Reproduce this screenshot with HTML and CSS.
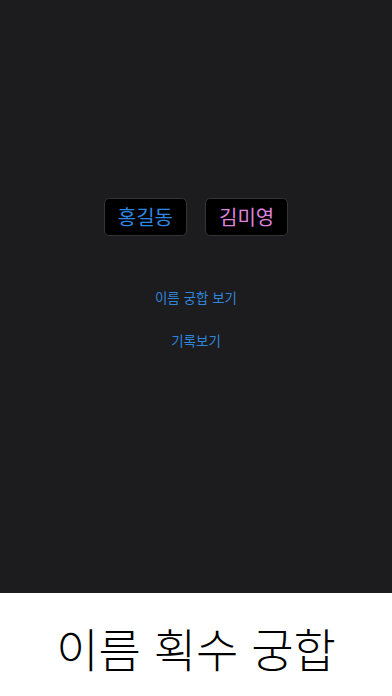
FILE: index.html
```html
<!DOCTYPE html>
<html lang="ko">
<head>
<meta charset="utf-8">
<link rel="stylesheet" href="styles.css">
</head>
<body>
<div class="screen">
  <div class="names">
    <div class="name-box blue">홍길동</div>
    <div class="name-box pink">김미영</div>
  </div>
  <div class="links">
    <a class="link">이름 궁합 보기</a>
    <a class="link">기록보기</a>
  </div>
</div>
<div class="footer">이름 획수 궁합</div>
</body>
</html>
```
FILE: styles.css
```css
html, body {
  margin: 0;
  padding: 0;
  width: 392px;
  height: 696px;
  overflow: hidden;
  font-family: "Noto Sans CJK KR", "Noto Sans", sans-serif;
  background: #ffffff;
}
.screen {
  height: 593px;
  box-sizing: border-box;
  background: #1c1c1e;
  padding-top: 198px;
  display: flex;
  flex-direction: column;
  align-items: center;
}
.names {
  display: flex;
  gap: 18px;
  justify-content: center;
}
.name-box {
  height: 38px;
  box-sizing: border-box;
  padding: 0 13px;
  border: 1px solid #343436;
  border-radius: 5px;
  background: #000;
  font-size: 20px;
  display: flex;
  align-items: center;
  justify-content: center;
  line-height: 1;
}
.blue { color: #2f86e0; }
.pink { color: #de83de; }
.links {
  margin-top: 51px;
  display: flex;
  flex-direction: column;
  align-items: center;
  gap: 23px;
}
.link {
  color: #2f84dc;
  font-size: 13.5px;
  line-height: 20px;
}
.footer {
  height: 103px;
  display: flex;
  align-items: center;
  justify-content: center;
  padding-top: 4px;
  box-sizing: border-box;
  color: #000;
  font-size: 46px;
  font-weight: 300;
  line-height: 1;
}
```
